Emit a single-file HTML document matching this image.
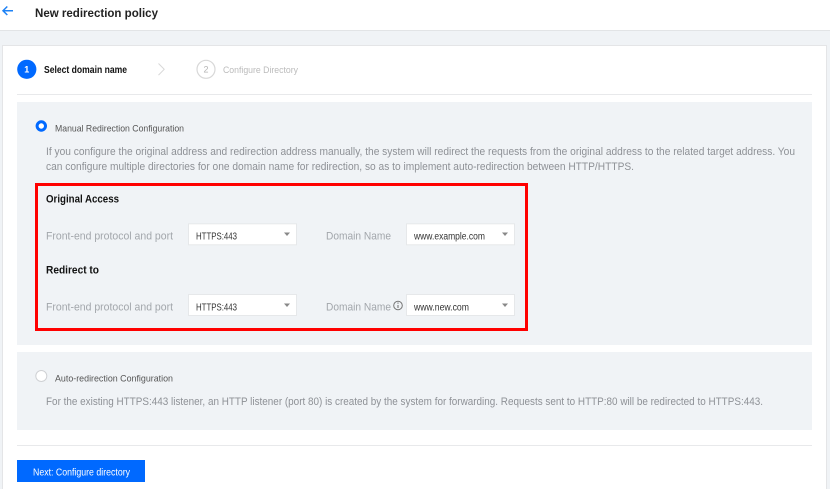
<!DOCTYPE html>
<html><head><meta charset="utf-8"><style>
html,body{margin:0;padding:0;background:#f0f3f6;width:830px;height:489px;overflow:hidden}
svg{display:block}
text{font-family:"Liberation Sans",sans-serif}
</style></head><body>
<svg width="830" height="489" viewBox="0 0 830 489" xmlns="http://www.w3.org/2000/svg">
<rect width="830" height="489" fill="#f0f3f6"/>
<rect width="830" height="30" fill="#fff"/>
<rect y="30" width="830" height="1" fill="#e2e4e6"/>
<path d="M3 489V46h823v443" fill="#fff"/>
<path d="M2.500 489V45.500h824V489" fill="none" stroke="#e4e5e7"/>
<path d="M13 10.700H3.500M7.300 6.500L3 10.700 7.300 15" fill="none" stroke="#1e82f5" stroke-width="1.500"/>
<text x="35" y="17" font-size="12" font-weight="700" fill="#222" textLength="123" lengthAdjust="spacingAndGlyphs">New redirection policy</text>

<circle cx="26.800" cy="69.300" r="9.600" fill="#0069ff"/>
<text x="26.800" y="72.500" font-size="9" font-weight="700" fill="#fff" text-anchor="middle">1</text>
<text x="44" y="72.800" font-size="10" font-weight="700" fill="#111" textLength="83" lengthAdjust="spacingAndGlyphs">Select domain name</text>
<path d="M158.500 63.500l5.700 5.800-5.700 5.800" fill="none" stroke="#d8d8d8"/>
<circle cx="206" cy="69.300" r="9" fill="#fff" stroke="#d8d8d8" stroke-width="1.200"/>
<text x="206" y="72.500" font-size="9" fill="#b5b5b5" text-anchor="middle">2</text>
<text x="223" y="72.800" font-size="9.500" fill="#bbb" textLength="75" lengthAdjust="spacingAndGlyphs">Configure Directory</text>
<rect x="17" y="94" width="795" height="1" fill="#e8e9eb"/>

<rect x="17" y="102" width="795" height="243" fill="#f0f3f6"/>
<circle cx="41.300" cy="126" r="4.200" fill="#fff" stroke="#0069ff" stroke-width="3"/>
<text x="55" y="131.500" font-size="9.500" fill="#555" textLength="129" lengthAdjust="spacingAndGlyphs">Manual Redirection Configuration</text>
<text x="46" y="155" font-size="11" fill="#8e9196" textLength="749" lengthAdjust="spacingAndGlyphs">If you configure the original address and redirection address manually, the system will redirect the requests from the original address to the related target address. You</text>
<text x="46" y="170" font-size="11" fill="#8e9196" textLength="588" lengthAdjust="spacingAndGlyphs">can configure multiple directories for one domain name for redirection, so as to implement auto-redirection between HTTP/HTTPS.</text>

<rect x="36.500" y="184.500" width="490" height="145" fill="none" stroke="#f00" stroke-width="3"/>

<text x="46" y="202.500" font-size="11" font-weight="700" fill="#111" textLength="73" lengthAdjust="spacingAndGlyphs">Original Access</text>
<text x="46" y="239.500" font-size="11" fill="#a2a6ab" textLength="127" lengthAdjust="spacingAndGlyphs">Front-end protocol and port</text>
<rect x="188.500" y="223.800" width="108" height="21" fill="#fff" stroke="#e6e8ea"/>
<text x="196" y="239.500" font-size="9.800" fill="#333" textLength="41" lengthAdjust="spacingAndGlyphs">HTTPS:443</text>
<path d="M284 232.500h6l-3 3.500z" fill="#888"/>
<text x="326" y="239.500" font-size="11" fill="#a2a6ab" textLength="65" lengthAdjust="spacingAndGlyphs">Domain Name</text>
<rect x="406.500" y="223.800" width="108" height="21" fill="#fff" stroke="#e6e8ea"/>
<text x="414" y="239.500" font-size="9.800" fill="#333" textLength="71" lengthAdjust="spacingAndGlyphs">www.example.com</text>
<path d="M502 232.500h6l-3 3.500z" fill="#888"/>

<text x="46" y="273.500" font-size="11" font-weight="700" fill="#111" textLength="53" lengthAdjust="spacingAndGlyphs">Redirect to</text>
<text x="46" y="310.300" font-size="11" fill="#a2a6ab" textLength="127" lengthAdjust="spacingAndGlyphs">Front-end protocol and port</text>
<rect x="188.500" y="294.500" width="108" height="21" fill="#fff" stroke="#e6e8ea"/>
<text x="196" y="310.300" font-size="9.800" fill="#333" textLength="41" lengthAdjust="spacingAndGlyphs">HTTPS:443</text>
<path d="M284 303.500h6l-3 3.500z" fill="#888"/>
<text x="326" y="310.300" font-size="11" fill="#a2a6ab" textLength="65" lengthAdjust="spacingAndGlyphs">Domain Name</text>
<circle cx="398" cy="305.500" r="4.300" fill="none" stroke="#777" stroke-width="1"/>
<path d="M398 305v3M398 302.500v1.200" stroke="#777" stroke-width="1.100" fill="none"/>
<rect x="406.500" y="294.500" width="108" height="21" fill="#fff" stroke="#e6e8ea"/>
<text x="414" y="310.300" font-size="9.800" fill="#333" textLength="55" lengthAdjust="spacingAndGlyphs">www.new.com</text>
<path d="M502 303.500h6l-3 3.500z" fill="#888"/>

<rect x="17" y="352" width="795" height="78" fill="#f0f3f6"/>
<circle cx="41.300" cy="376" r="5.500" fill="#fff" stroke="#cfd1d4" stroke-width="1"/>
<text x="55" y="381.500" font-size="9.500" fill="#555" textLength="118" lengthAdjust="spacingAndGlyphs">Auto-redirection Configuration</text>
<text x="46" y="405" font-size="11" fill="#8e9196" textLength="717" lengthAdjust="spacingAndGlyphs">For the existing HTTPS:443 listener, an HTTP listener (port 80) is created by the system for forwarding. Requests sent to HTTP:80 will be redirected to HTTPS:443.</text>

<rect x="17" y="445" width="795" height="1" fill="#e8e9eb"/>
<rect x="17" y="460" width="128" height="22" fill="#0069ff"/>
<text x="33" y="475.500" font-size="9.800" fill="#fff" textLength="97" lengthAdjust="spacingAndGlyphs">Next: Configure directory</text>
</svg>
</body></html>
